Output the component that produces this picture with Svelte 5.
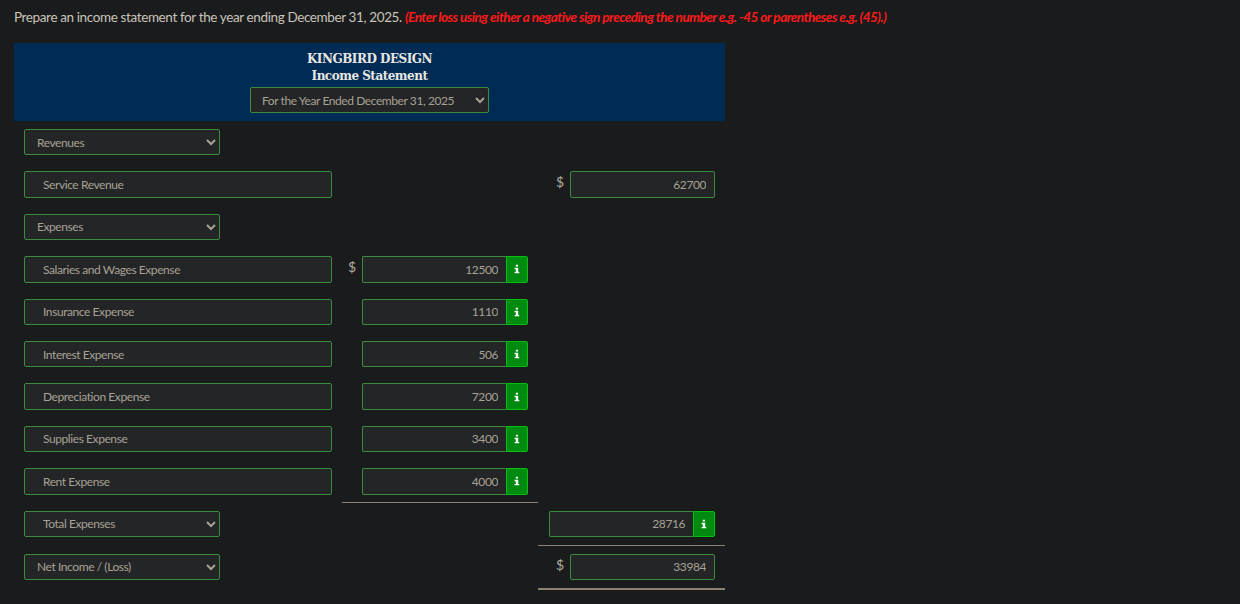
<script>
  const expenses = [
    { label: 'Salaries and Wages Expense', value: '12500', dollar: true },
    { label: 'Insurance Expense', value: '1110' },
    { label: 'Interest Expense', value: '506' },
    { label: 'Depreciation Expense', value: '7200' },
    { label: 'Supplies Expense', value: '3400' },
    { label: 'Rent Expense', value: '4000', ruled: true }
  ]
</script>

{#snippet info()}
  <span class="info">
    <svg viewBox="0 0 8 12" width="6" height="10" aria-hidden="true">
      <path d="M2.4 0.4h3v2.4h-3z M0.8 4.4h4.8v5.6h1.4v1.8H0.8V10h1.6V6.2H0.8z" fill="#fff" />
    </svg>
  </span>
{/snippet}

<main>
  <p class="prompt">
    Prepare an income statement for the year ending December 31, 2025.
    <em>(Enter loss using either a negative sign preceding the number e.g. -45 or parentheses e.g. (45).)</em>
  </p>

  <div class="statement">
    <header>
      <div>KINGBIRD DESIGN</div>
      <div>Income Statement</div>
      <select class="period">
        <option>For the Year Ended December 31, 2025</option>
      </select>
    </header>

    <div class="row">
      <div class="name"><select class="short"><option>Revenues</option></select></div>
    </div>

    <div class="row">
      <div class="name"><input class="label" value="Service Revenue" readonly /></div>
      <div class="mid"></div>
      <div class="right">
        <span class="dollar">$</span>
        <input class="num" value="62700" readonly />
      </div>
    </div>

    <div class="row">
      <div class="name"><select class="short"><option>Expenses</option></select></div>
    </div>

    {#each expenses as item}
      <div class="row">
        <div class="name"><input class="label" value={item.label} readonly /></div>
        <div class="mid" class:ruled={item.ruled}>
          <span class="dollar">{item.dollar ? '$' : ''}</span>
          <div class="group">
            <input class="num" value={item.value} readonly />
            {@render info()}
          </div>
        </div>
      </div>
    {/each}

    <div class="row total">
      <div class="name"><select class="short indent"><option>Total Expenses</option></select></div>
      <div class="mid"></div>
      <div class="right ruled">
        <div class="group">
          <input class="num" value="28716" readonly />
          {@render info()}
        </div>
      </div>
    </div>

    <div class="row">
      <div class="name"><select class="short"><option>Net Income / (Loss)</option></select></div>
      <div class="mid"></div>
      <div class="right double">
        <span class="dollar">$</span>
        <input class="num" value="33984" readonly />
      </div>
    </div>
  </div>
</main>

<style>
  :global(body) {
    background: #1a1b1d;
    color-scheme: dark;
  }

  main {
    height: 604px;
    overflow: hidden;
    font-family: Lato, sans-serif;
    color: #c9c4b9;
  }

  .prompt {
    margin: 0;
    padding: 9px 14px 0;
    height: 43px;
    box-sizing: border-box;
    font-size: 13.5px;
    line-height: 17px;
    letter-spacing: -0.38px;
    white-space: nowrap;
  }

  .prompt em {
    color: #ff1a1a;
    font-weight: 700;
    letter-spacing: -0.5px;
  }

  .statement {
    width: 711px;
    margin-left: 14px;
  }

  header {
    height: 78px;
    box-sizing: border-box;
    padding-top: 8px;
    background: #002b54;
    text-align: center;
    font-family: "DejaVu Serif", serif;
    font-size: 12px;
    font-weight: 700;
    line-height: 17px;
    letter-spacing: -0.5px;
    color: #e8e6e3;
  }

  select,
  input {
    display: block;
    box-sizing: border-box;
    height: 26.4px;
    margin: 0;
    border: 1px solid #3b8a3e;
    border-radius: 2px;
    background-color: #232527;
    color: #a8a295;
    font-family: Lato, sans-serif;
    font-size: 12px;
    letter-spacing: -0.42px;
  }

  .period {
    width: 239px;
    margin: 2px auto 0;
    padding-left: 7px;
  }

  .row {
    display: grid;
    grid-template-columns: 328px 196px 187px;
    height: 42.4px;
  }

  .row.total {
    height: 43px;
  }

  .name {
    padding: 8px 0 0 10px;
  }

  .short {
    width: 196px;
    padding-left: 8px;
  }

  .short.indent {
    padding-left: 14px;
  }

  .label {
    width: 308px;
    padding-left: 18px;
    outline: none;
  }

  .mid,
  .right {
    display: flex;
    align-items: flex-start;
    padding-top: 8px;
  }

  .mid .dollar {
    box-sizing: border-box;
    width: 20px;
    padding-left: 6px;
  }

  .mid .group {
    width: 166px;
  }

  .right {
    justify-content: flex-end;
    padding-right: 10px;
  }

  .right .dollar {
    margin-right: 6px;
  }

  .right > .num {
    width: 145px;
  }

  .right .group {
    width: 166px;
  }

  .dollar {
    font-size: 14px;
    line-height: 22px;
    color: #b3ad9f;
  }

  .group {
    display: flex;
  }

  .num {
    min-width: 0;
    padding-right: 8px;
    text-align: right;
    outline: none;
  }

  .group .num {
    flex: 1;
    border-right: 0;
    border-radius: 2px 0 0 2px;
  }

  .info {
    display: flex;
    align-items: center;
    justify-content: center;
    flex: none;
    box-sizing: border-box;
    width: 22px;
    height: 26.4px;
    border: 1px solid #00c20f;
    border-radius: 0 2px 2px 0;
    background: #008a10;
  }

  .ruled {
    height: 34px;
    border-bottom: 1px solid #8b8172;
  }

  .double {
    height: 34px;
    border-bottom: 2px solid #8b8172;
  }
</style>
